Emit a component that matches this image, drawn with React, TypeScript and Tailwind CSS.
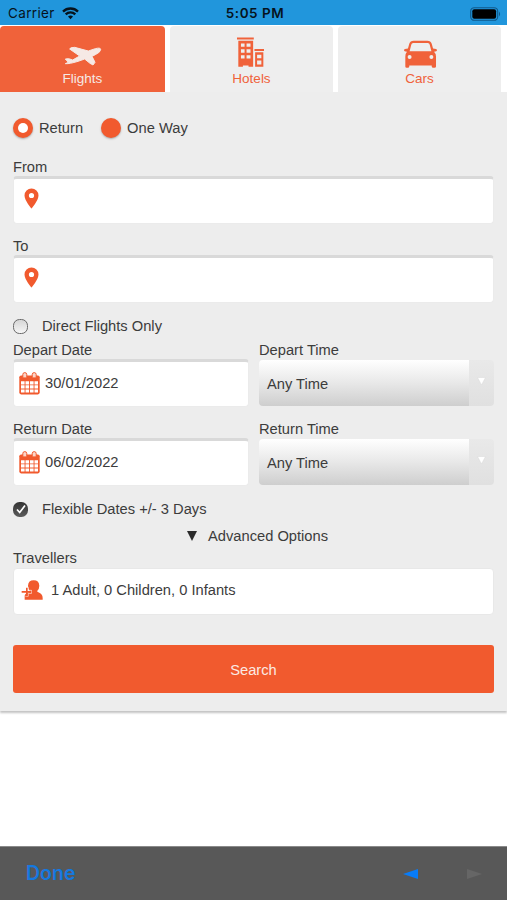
import React, { useState } from 'react';

const PlaneIcon = () => (
  <svg viewBox="190 132 114 66" className="w-[38px] h-[22px]" fill="currentColor" stroke="currentColor" strokeWidth="3" strokeLinejoin="round">
    <path d="M194 188 L203 184 L194 174 L204 173 L216 177 L237 165 L207 144 Q208 139 222 139 L263 150 L284 143 Q299 139 300 145 Q300 154 284 161 L274 166 L283 184 L277 192 L268 187 L252 174 L232 181 Q206 189 195 188 Z" />
  </svg>
);

const HotelIcon = () => (
  <svg viewBox="37 19 82 90" className="w-[27px] h-[30px]" fill="currentColor" fillRule="evenodd">
    <path d="M37 20h51v6H37zM41 30h45v79H72v-4H55v4H41zM49 38v10h11V38zM66 38v10h12V38zM49 56v10h11V56zM66 56v10h12V56zM49 74v10h11V74zM66 74v10h12V74z" />
    <path d="M90 55h29v6H90zM92 65h25v44H92zM98 72v11h13V72zM98 90v12h13V90z" />
  </svg>
);

const CarIcon = () => (
  <svg viewBox="452 122 100 84" className="w-[33px] h-[28px]" fill="currentColor" fillRule="evenodd">
    <path d="M481 124 H523 Q533 124 536 133 L540 147 Q552 147 552 152 Q552 157 543 157 Q549 162 549 172 V202 Q549 206 544 206 H541 Q536 206 536 202 V199 H468 V202 Q468 206 463 206 H460 Q456 206 456 202 V172 Q456 162 461 157 Q452 157 452 152 Q452 147 464 147 L468 133 Q471 124 481 124 Z M480 131 Q475 131 474 136 L469 156 H535 L530 136 Q529 131 524 131 Z M463 173 a6 6 0 1 0 12 0 a6 6 0 1 0 -12 0 Z M529 173 a6 6 0 1 0 12 0 a6 6 0 1 0 -12 0 Z" />
  </svg>
);

const PinIcon = () => (
  <svg viewBox="0 0 15 21" className="w-[15px] h-[21px] text-[#f15a2e]" fill="currentColor" fillRule="evenodd">
    <path d="M7.5 0.5 A7 7 0 0 1 14.5 7.5 C14.5 12.5 7.5 20.5 7.5 20.5 C7.5 20.5 0.5 12.5 0.5 7.5 A7 7 0 0 1 7.5 0.5 Z M7.5 4.9 a2.6 2.6 0 1 0 0 5.2 a2.6 2.6 0 1 0 0 -5.2 Z" />
  </svg>
);

const CalendarIcon = () => (
  <svg viewBox="0 0 21 23" className="w-[21px] h-[23px] text-[#f15a2e]">
    <rect x="0.3" y="3.4" width="20.4" height="19" rx="1.8" fill="currentColor" />
    <path d="M2 9.200h3.600v3.200H2zM6.500 9.200h3.600v3.200H6.500zM11 9.200h3.600v3.200H11zM15.500 9.200H19v3.200h-3.500zM2 13.300h3.600v3.200H2zM6.500 13.300h3.600v3.200H6.500zM11 13.300h3.600v3.200H11zM15.500 13.300H19v3.200h-3.500zM2 17.400h3.600v3.200H2zM6.500 17.400h3.600v3.200H6.500zM11 17.400h3.600v3.200H11zM15.500 17.400H19v3.200h-3.500z" fill="#fff" />
    <path d="M3.800 5.900V2.600a2 2 0 0 1 4 0v3.300zM13.200 5.900V2.600a2 2 0 0 1 4 0v3.300z" fill="#fbd5c8" stroke="currentColor" strokeWidth="1" />
  </svg>
);

const TravellerIcon = () => (
  <svg viewBox="64 253 66 60" className="w-[22px] h-[20px] text-[#f15a2e]">
    <path d="M75 312V300Q76 294 88 290L91 287Q85 281 85 270Q86 254 102 254Q118 254 119 270Q119 281 112 287L116 290Q129 295 129 307V312Z" fill="currentColor" />
    <path d="M77.500 275h8v9h10v9h-10v9h-8" fill="none" stroke="#fff" strokeWidth="2" />
    <path d="M81.500 276v26M66 288.500h29" stroke="currentColor" strokeWidth="5" />
  </svg>
);

const WifiIcon = () => (
  <svg viewBox="0 0 17 13" className="w-[17px] h-[13px]" fill="none" stroke="#06131d" strokeWidth="2.300">
    <path d="M1 4.600a10.600 10.600 0 0 1 15 0M3.700 7.400a6.800 6.800 0 0 1 9.600 0" />
    <path d="M8.500 12.300L6 9.600a3.600 3.600 0 0 1 5 0z" fill="#06131d" stroke="none" />
  </svg>
);

const StatusBar = () => (
  <div className="h-[25px] bg-[#2196dc] grid grid-cols-3 items-center pl-2 pr-[5px] pt-[2px] text-[#06131d]">
    <div className="flex items-center gap-[7px] font-['Inter'] text-[13.5px] tracking-[0.35px]">
      <span>Carrier</span>
      <WifiIcon />
    </div>
    <div className="text-center font-['Inter'] font-semibold text-[13.5px] tracking-[0.5px] whitespace-nowrap">5:05 PM</div>
    <div className="flex justify-end">
      <svg viewBox="0 0 32 14" className="w-[32px] h-[14px]">
        <rect x="0.700" y="0.700" width="27" height="12.600" rx="3.600" fill="none" stroke="#10598a" strokeWidth="1.100" />
        <rect x="2.300" y="2.300" width="23.800" height="9.400" rx="2" fill="#000" />
        <path d="M29 4.500q2.200 2.500 0 5z" fill="#10598a" />
      </svg>
    </div>
  </div>
);

interface TabProps {
  label: string;
  icon: React.ReactNode;
  active: boolean;
  onClick: () => void;
}

const Tab = ({ label, icon, active, onClick }: TabProps) => (
  <button
    onClick={onClick}
    className={`h-[67px] flex flex-col items-center justify-end pb-[5px] rounded-t-[4px] text-[13.5px] leading-[18px] ${
      active ? 'bg-[#f0623a] text-[#f6e9e5]' : 'bg-[#eeeeee] text-[#f0623a]'
    }`}
  >
    {icon}
    <span>{label}</span>
  </button>
);

const Field = ({ children }: { children?: React.ReactNode }) => (
  <div className="-mt-px h-12 rounded-[4px] bg-white border border-t-[3px] border-[#ebebeb] border-t-[#d9d9d9] flex">
    {children}
  </div>
);

const Label = ({ children }: { children: React.ReactNode }) => (
  <div className="h-5 leading-5">{children}</div>
);

const DateField = ({ label, value }: { label: string; value: string }) => (
  <div className="w-[236px]">
    <Label>{label}</Label>
    <Field>
      <div className="flex items-center gap-[5px] pl-[5px] pb-[1px]">
        <CalendarIcon />
        <span>{value}</span>
      </div>
    </Field>
  </div>
);

const TimeSelect = ({ label }: { label: string }) => (
  <div className="w-[235px]">
    <Label>{label}</Label>
    <div className="h-[46px] flex rounded-[4px] overflow-hidden">
      <div className="w-[210px] flex items-center pl-2 pt-[2px] bg-linear-to-b from-white via-[#e8e8e8] to-[#cecece]">Any Time</div>
      <div className="flex-1 bg-linear-to-b from-[#e9e9e9] to-[#e0e0e0] flex justify-center pt-[17px]">
        <svg viewBox="0 0 9 9" className="w-[9px] h-[9px]">
          <path d="M0.500 0.500h8L4.500 8z" fill="#fff" stroke="#d8d8d8" strokeWidth="0.500" />
        </svg>
      </div>
    </div>
  </div>
);

export default function App() {
  const [tab, setTab] = useState('Flights');

  const tabs = [
    { label: 'Flights', icon: <div className="mb-[3px]"><PlaneIcon /></div> },
    { label: 'Hotels', icon: <div className="mb-[3px] mr-[3px]"><HotelIcon /></div> },
    { label: 'Cars', icon: <div className="mb-[2px] ml-[2px]"><CarIcon /></div> },
  ];

  return (
    <div className="w-full max-w-[507px] h-[900px] bg-white flex flex-col overflow-hidden font-['Liberation_Sans',Arial,sans-serif] text-[14.7px] text-[#3c3c3c]">
      <StatusBar />

      {/* Category tabs */}
      <div className="h-[67px] pt-[1px] pr-[6px] grid grid-cols-[165px_163px_163px] gap-[5px]">
        {tabs.map((t) => (
          <Tab key={t.label} label={t.label} icon={t.icon} active={tab === t.label} onClick={() => setTab(t.label)} />
        ))}
      </div>

      {/* Search form */}
      <div className="bg-[#ededed] px-[13px] pt-[25px] pb-[18px] shadow-[0_2px_2px_#c4c4c4]">
        <div className="flex h-[22px] items-center">
          <span className="w-5 h-5 rounded-full bg-[#f15a2e] flex items-center justify-center shadow-[0_1px_2px_#aaaaaa]">
            <span className="w-[10px] h-[10px] rounded-full bg-white" />
          </span>
          <span className="ml-[6px] mr-[18px]">Return</span>
          <span className="w-5 h-5 rounded-full bg-[#f15a2e] shadow-[0_1px_2px_#aaaaaa]" />
          <span className="ml-[6px]">One Way</span>
        </div>

        <div className="mt-[18px]">
          <Label>From</Label>
          <Field>
            <div className="pl-[10px] pt-[9px]"><PinIcon /></div>
          </Field>
        </div>
        <div className="mt-3">
          <Label>To</Label>
          <Field>
            <div className="pl-[10px] pt-[9px]"><PinIcon /></div>
          </Field>
        </div>

        <div className="mt-[13px] h-5 flex items-center">
          <span className="w-[15px] h-[15px] rounded-[6.5px] border border-[#6a6a6a] bg-linear-to-b from-[#d6d6d6] to-[#f6f6f6]" />
          <span className="ml-[14px]">Direct Flights Only</span>
        </div>

        <div className="mt-1 flex justify-between">
          <DateField label="Depart Date" value="30/01/2022" />
          <TimeSelect label="Depart Time" />
        </div>
        <div className="mt-3 flex justify-between">
          <DateField label="Return Date" value="06/02/2022" />
          <TimeSelect label="Return Time" />
        </div>

        <div className="mt-[13px] h-5 flex items-center">
          <span className="w-[15px] h-[15px] rounded-[6.5px] bg-linear-to-b from-[#333333] to-[#5c5c5c] flex items-center justify-center">
            <svg viewBox="0 0 12 12" className="w-[12px] h-[12px]" fill="none" stroke="#fff" strokeWidth="1.700">
              <path d="M2 6.500l2.700 3L10 2.500" />
            </svg>
          </span>
          <span className="ml-[14px]">Flexible Dates +/- 3 Days</span>
        </div>

        <div className="mt-[7px] h-5 flex items-center justify-center pl-[8px]">
          <svg viewBox="0 0 10 10" className="w-[10px] h-[10px] mr-[11px]">
            <path d="M0 0h10L5 10z" fill="#2b2b2b" />
          </svg>
          <span>Advanced Options</span>
        </div>

        <div className="mt-[2px]">
          <Label>Travellers</Label>
          <div className="h-[47px] rounded-[4px] bg-white border border-[#e8e8e8] flex items-center pl-[7px] pb-[3px]">
            <TravellerIcon />
            <span className="ml-2">1 Adult, 0 Children, 0 Infants</span>
          </div>
        </div>

        <button className="mt-[30px] w-full h-[48px] rounded-[3px] bg-[#f15a2e] text-[#fbeae4] pt-[2px]">Search</button>
      </div>

      {/* Keyboard toolbar */}
      <div className="mt-auto h-[54px] bg-[#585858] border-t border-[#8a8a8a] flex items-center pl-[26px] pr-[25px]">
        <span className="font-['Inter'] font-semibold text-[19.5px] text-[#1579e0]">Done</span>
        <svg viewBox="0 0 15 10" className="ml-auto w-[15px] h-[10px]">
          <path d="M15 0v10L0 5z" fill="#087cf8" />
        </svg>
        <svg viewBox="0 0 15 10" className="ml-[49px] w-[15px] h-[10px]">
          <path d="M0 0v10l15-5z" fill="#666666" />
        </svg>
      </div>
    </div>
  );
}
